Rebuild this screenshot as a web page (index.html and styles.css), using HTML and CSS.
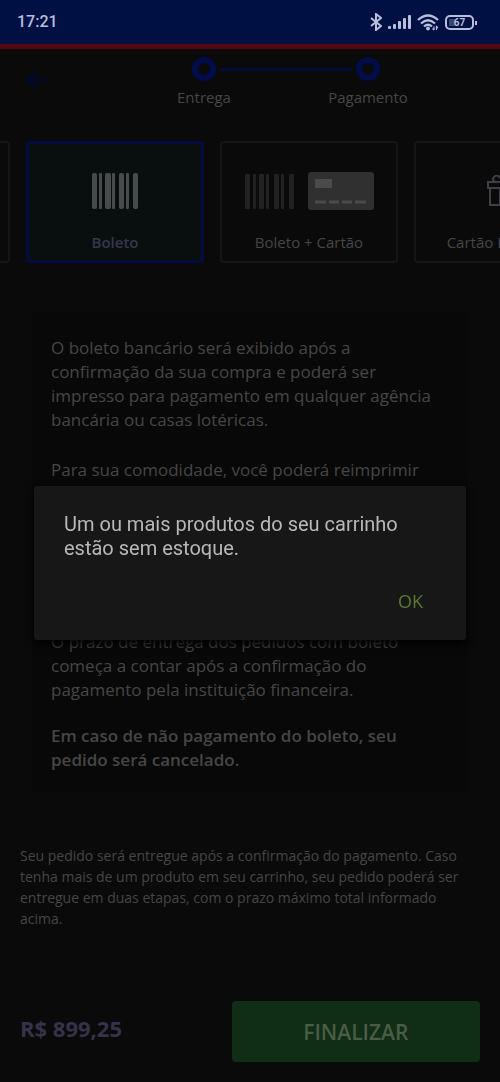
FILE: index.html
```html
<!DOCTYPE html>
<html lang="pt-BR">
<head>
<meta charset="utf-8">
<meta name="viewport" content="width=device-width, initial-scale=1">
<title>Pagamento</title>
<link rel="stylesheet" href="styles.css">
</head>
<body>
<div class="app">
  <div class="status">
    <time class="clock">17:21</time>
    <div class="status-icons">
      <svg width="12" height="18" viewBox="0 0 12 18" fill="none" stroke="currentColor" stroke-width="2"><path d="M1 5l10 8-5 4V1l5 4-10 8"/></svg>
      <svg width="23" height="16" viewBox="0 0 23 16" fill="currentColor"><rect x="0" y="12" width="3" height="3" rx="1"/><rect x="5" y="10" width="3" height="5" rx="1"/><rect x="10" y="7" width="3" height="8" rx="1"/><rect x="15" y="4" width="3" height="11" rx="1"/><rect x="20" y="1" width="3" height="14" rx="1"/></svg>
      <svg width="22" height="17" viewBox="0 0 22 17" fill="none" stroke="currentColor" stroke-width="2.300"><path d="M1 6Q11-3 21 6M4 9.500Q11 3 18 9.500M7 12.500Q11 9 15 12.500"/><circle cx="11" cy="14.500" r="1.900" fill="currentColor" stroke="none"/><path stroke-width="1.200" d="M17 12.500v3.500M15.500 14.500l1.500 1.500M19.500 16v-3.500l1.500 1.500"/></svg>
      <span class="battery"><span class="battery-level">67</span></span>
    </div>
  </div>

  <header class="header">
    <button class="back" type="button" aria-label="Voltar">
      <svg width="22" height="20" viewBox="0 0 22 20" fill="none" stroke="currentColor" stroke-width="2.500"><path d="M21 10H2M10 2l-8 8 8 8"/></svg>
    </button>
    <ol class="steps">
      <li class="step"><span class="dot"></span>Entrega</li>
      <li class="step"><span class="dot"></span>Pagamento</li>
    </ol>
  </header>

  <main class="main">
    <div class="methods">
      <button class="method" type="button" aria-label="Cartão"></button>
      <button class="method selected" type="button" aria-pressed="true">
        <span class="art"><svg width="46" height="36" viewBox="0 0 46 36" fill="#484b4b"><rect width="5" height="36" rx="2"/><rect x="7" width="3" height="36" rx="1"/><rect x="13" width="6" height="36" rx="2"/><rect x="20" width="3" height="36" rx="1"/><rect x="27" width="5" height="36" rx="2"/><rect x="34" width="3" height="36" rx="1"/><rect x="41" width="5" height="36" rx="2"/></svg></span>
        Boleto
      </button>
      <button class="method" type="button">
        <span class="art">
          <svg width="49" height="35" viewBox="0 0 49 35" fill="#222"><rect width="5" height="35" rx="1"/><rect x="8" width="3" height="35" rx="1"/><rect x="14" width="5" height="35" rx="1"/><rect x="21" width="3" height="35" rx="1"/><rect x="29" width="5" height="35" rx="1"/><rect x="36" width="3" height="35" rx="1"/><rect x="44" width="5" height="35" rx="1"/></svg>
          <svg width="66" height="38" viewBox="0 0 66 38"><rect width="66" height="38" rx="3" fill="#303030"/><path fill="#4b4b4b" d="M7 7h17v9H7zM7 28.500h11v3H7zM21 28.500h10v3H21zM34 28.500h10v3H34zM47 28.500h11v3H47z"/></svg>
        </span>
        Boleto + Cartão
      </button>
      <button class="method" type="button">
        <span class="art"><svg width="32" height="32" viewBox="0 0 32 32" fill="none" stroke="#3f3f45" stroke-width="2"><path d="M1 7h30v6H1zM3 13h26v17H3zM13 13v17M19 13v17M10 7Q6 7 6 4Q7 0 11 1Q14 2 16 7M22 7Q26 7 26 4Q25 0 21 1Q18 2 16 7"/></svg></span>
        Cartão Presente
      </button>
    </div>

    <section class="panel">
      <p>O boleto bancário será exibido após a confirmação da sua compra e poderá ser impresso para pagamento em qualquer agência bancária ou casas lotéricas.</p>
      <p>Para sua comodidade, você poderá reimprimir</p>
      <p class="deadline">O prazo de entrega dos pedidos com boleto começa a contar após a confirmação do pagamento pela instituição financeira.</p>
      <p class="warning">Em caso de não pagamento do boleto, seu pedido será cancelado.</p>
    </section>

    <p class="notice">Seu pedido será entregue após a confirmação do pagamento. Caso tenha mais de um produto em seu carrinho, seu pedido poderá ser entregue em duas etapas, com o prazo máximo total informado acima.</p>
  </main>

  <footer class="footer">
    <strong class="price">R$ 899,25</strong>
    <button class="finish" type="button">FINALIZAR</button>
  </footer>
</div>

<div class="overlay">
  <div class="dialog" role="alertdialog" aria-modal="true" aria-labelledby="message">
    <p class="message" id="message">Um ou mais produtos do seu carrinho estão sem estoque.</p>
    <button class="ok" type="button">OK</button>
  </div>
</div>
</body>
</html>
```

FILE: styles.css
```css
* { box-sizing: border-box; }
body { margin: 0; background: #0a0a0a; color: #464646; font-family: "Open Sans", "Noto Sans", sans-serif; }
p, ol { margin: 0; padding: 0; }
button { font: inherit; color: inherit; border: 0; background: none; padding: 0; }
svg { display: block; flex: none; }

.app { display: flex; flex-direction: column; min-height: 100vh; overflow: hidden; }

.status { display: flex; justify-content: space-between; align-items: center; height: 49px; padding: 0 26px 0 17px; background: #001043; border-bottom: 5px solid #520a12; color: #b8bfda; }
.clock { font: 500 16px/20px Roboto, sans-serif; }
.status-icons { display: flex; align-items: center; gap: 6px; }
.battery { position: relative; display: flex; padding: 2px; width: 29px; height: 15px; border: 2px solid currentColor; border-radius: 5px; }
.battery::after { content: ""; position: absolute; right: -5px; top: 4px; width: 2px; height: 4px; background: currentColor; }
.battery-level { flex: 1; background: linear-gradient(90deg, #3a4772 30%, transparent 30%); font: 700 10px/8px Roboto, sans-serif; text-align: center; }

.header { display: flex; align-items: flex-start; padding: 8px 50px 0 26px; height: 92px; }
.back { padding: 13px 0; color: #020935; }
.steps { display: flex; width: 328px; margin-left: auto; list-style: none; font-size: 15px; line-height: 20px; }
.step { position: relative; flex: 1; display: flex; flex-direction: column; align-items: center; gap: 6px; }
.dot { width: 24px; height: 24px; border: 6px solid #020c4a; border-radius: 50%; }
.step + .step::before { content: ""; position: absolute; top: 11px; left: calc(16px - 50%); right: calc(50% + 16px); height: 3px; background: #020c3a; }

.main { flex: 1; }
.methods { display: flex; gap: 16px; margin-left: -168px; }
.method { flex: none; display: flex; flex-direction: column; align-items: center; width: 178px; height: 122px; padding: 28px 0 0; border: 2px solid #161616; border-radius: 4px; font-size: 15px; line-height: 20px; white-space: nowrap; }
.art { display: flex; align-items: center; justify-content: center; gap: 14px; height: 40px; margin-bottom: 21px; }
.selected { border: 3px solid #040b42; padding-top: 27px; background: #090e0e; color: #37374b; font-weight: 600; }

.panel { margin: 49px 32px 0; padding: 24px 19px 20px; background: #080808; font-size: 17px; line-height: 24px; }
.panel p + p { margin-top: 26px; }
.panel .deadline { margin-top: 148px; }
.panel .warning { margin-top: 22px; font-weight: 600; }
.notice { margin: 53px 20px 0; font-size: 14px; line-height: 21px; }

.footer { display: flex; align-items: flex-start; justify-content: space-between; padding: 20px; }
.price { padding: 12px 0; color: #363249; font-size: 22px; line-height: 30px; }
.finish { width: 54%; height: 61px; border-radius: 4px; background: #102d15; color: #4a5c45; font-size: 21px; font-weight: 600; }

.overlay { position: fixed; inset: 44px 0 0; display: flex; align-items: center; padding: 0 34px; }
.dialog { flex: 1; display: flex; flex-direction: column; align-items: flex-end; gap: 27px; padding: 26px 30px 25px; border-radius: 3px; background: #171717; box-shadow: 0 4px 10px #000; }
.message { align-self: stretch; color: #b8b8b8; font: 20px/24px Roboto, sans-serif; }
.ok { padding: 0 13px; color: #5a7a32; font-size: 18px; line-height: 28px; }
```
